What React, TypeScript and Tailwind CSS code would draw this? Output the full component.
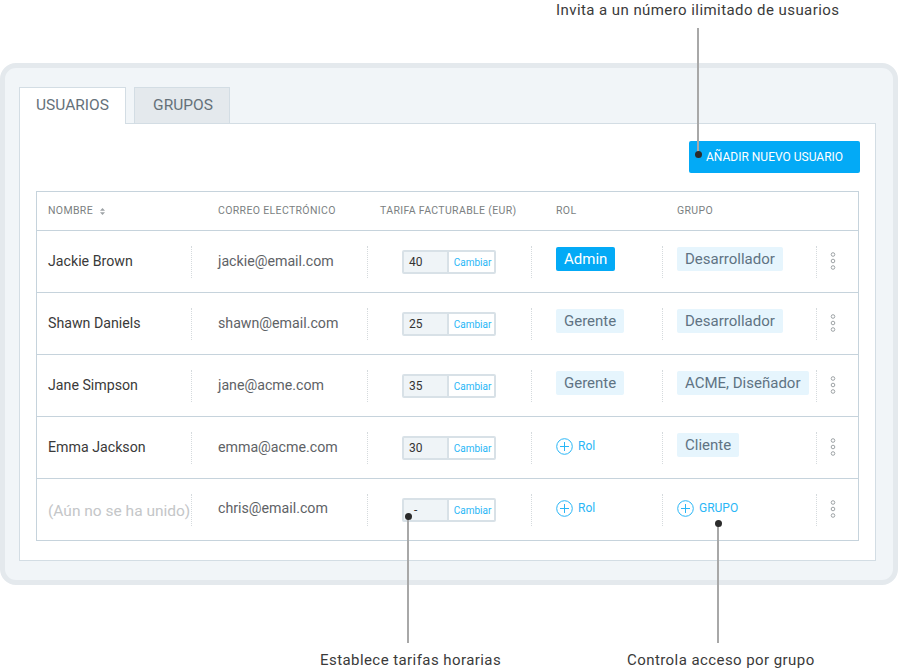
const ROWS = [
  { name: "Jackie Brown", email: "jackie@email.com", rate: "40", rol: "Admin", grupo: "Desarrollador" },
  { name: "Shawn Daniels", email: "shawn@email.com", rate: "25", rol: "Gerente", grupo: "Desarrollador" },
  { name: "Jane Simpson", email: "jane@acme.com", rate: "35", rol: "Gerente", grupo: "ACME, Diseñador" },
  { name: "Emma Jackson", email: "emma@acme.com", rate: "30", rol: "", grupo: "Cliente" },
  { name: "(Aún no se ha unido)", email: "chris@email.com", rate: "-", rol: "", grupo: "", pending: true },
];

function PlusCircle() {
  return (
    <svg width="17" height="17" viewBox="0 0 17 17" fill="none" stroke="#29b6f6" strokeWidth="1" className="shrink-0">
      <circle cx="8.5" cy="8.5" r="7.8" />
      <path d="M8.5 4v9M4 8.5h9" />
    </svg>
  );
}

function Dots() {
  return (
    <svg width="6" height="18" viewBox="0 0 6 18" fill="none" stroke="#9ea3a6" strokeWidth="1" className="mt-[-2px]">
      <circle cx="3" cy="2.5" r="1.8" />
      <circle cx="3" cy="9" r="1.8" />
      <circle cx="3" cy="15.5" r="1.8" />
    </svg>
  );
}

function Cell({ children, className = "" }: { children: React.ReactNode; className?: string }) {
  return (
    <div className="relative flex items-center">
      <div className="h-8 border-l border-dotted border-[#d5dadd]" />
      <div className={"flex h-full flex-1 items-center " + className}>{children}</div>
    </div>
  );
}

function Pill({ text, active }: { text: string; active?: boolean }) {
  return (
    <span
      className={
        "mt-[-5px] flex h-6 items-center whitespace-nowrap rounded-[2px] px-2 text-[15px] " +
        (active ? "bg-[#03aaf6] text-white" : "bg-[#e6f5fd] text-[#5f7383]")
      }
    >
      {text}
    </span>
  );
}

function AddLink({ text }: { text: string }) {
  return (
    <span className="mt-[-2px] flex items-center gap-[5px] text-xs text-[#29b6f6]">
      <PlusCircle />
      <span className="mb-[2px]">{text}</span>
    </span>
  );
}

function Callout({ text, className }: { text: string; className: string }) {
  return <p className={"absolute whitespace-nowrap text-[15px] leading-[18px] tracking-[0.43px] text-[#3a3a3a] " + className}>{text}</p>;
}

export default function App() {
  return (
    <div className="relative h-[669px] w-[898px] overflow-hidden bg-white pt-[63px] font-['Roboto',sans-serif]">
      <div className="h-[522px] rounded-[16px] border-[5px] border-[#e4e9ed] bg-[#f1f5f8] px-[14px] pt-[19px]">
        <div className="flex h-[36px] items-start gap-2">
          <div className="z-10 flex h-[37px] w-[107px] items-center justify-center border border-b-0 border-[#d3dde4] bg-white text-[15.5px] text-[#65717a]">
            USUARIOS
          </div>
          <div className="flex h-[36px] w-[96px] items-center justify-center border border-b-0 border-[#d3dde4] bg-[#e4e9ed] pl-[2px] pt-[1px] text-[15.5px] text-[#65717a]">
            GRUPOS
          </div>
        </div>
        <div className="h-[438px] w-[857px] border border-[#d3dde4] bg-white pl-4 pt-[17px]">
          <div className="flex justify-end pr-[15px]">
            <button className="flex h-8 w-[171px] items-center justify-center rounded-[2px] bg-[#03aaf6] text-xs text-white">
              AÑADIR NUEVO USUARIO
            </button>
          </div>
          <div className="mt-[18px] w-[823px] border border-[#c6d3dc]">
            <div className="grid h-[38px] grid-cols-[154px_176px_164px_131px_154px_1fr] items-center text-[10.5px] tracking-[0.35px] text-[#7b7f82]">
              <div className="flex items-center gap-[7px] pl-[11px]">
                NOMBRE
                <svg width="5" height="7" viewBox="0 0 5 7" fill="#9ea3a6">
                  <path d="M2.5 0 5 2.8H0zM2.5 7 0 4.2h5z" />
                </svg>
              </div>
              <div className="pl-[27px]">CORREO ELECTRÓNICO</div>
              <div className="pl-[13px]">TARIFA FACTURABLE (EUR)</div>
              <div className="pl-[25px]">ROL</div>
              <div className="pl-[15px]">GRUPO</div>
              <div />
            </div>
            {ROWS.map((row) => (
              <div
                key={row.email}
                className="grid h-[62px] grid-cols-[154px_176px_164px_131px_154px_1fr] border-t border-[#c6d3dc]"
              >
                <div
                  className={
                    "flex items-center whitespace-nowrap pl-[11px] " +
                    (row.pending ? "mt-1 text-[15.5px] text-[#c4c6c8]" : "text-[14.2px] text-[#3a3a3a]")
                  }
                >
                  {row.name}
                </div>
                <Cell className={"pl-[26px] text-[14.2px] text-[#5e6266] " + (row.pending ? "pb-[1px]" : "")}>{row.email}</Cell>
                <Cell className="pl-[34px]">
                  <div className="flex h-6 w-[94px] overflow-hidden rounded-[2px] border-2 border-[#d8e1e7] text-[10px]">
                    <div
                      className={
                        "flex w-[45px] items-center border-r-2 border-[#d8e1e7] bg-[#eff4f7] text-xs text-[#333] " +
                        (row.pending ? "pl-[10px]" : "pl-[5px]")
                      }
                    >
                      {row.rate}
                    </div>
                    <div className="flex flex-1 items-center justify-center pl-[2px] pt-[1px] text-[#29b6f6]">Cambiar</div>
                  </div>
                </Cell>
                <Cell className="pl-6">{row.rol ? <Pill text={row.rol} active={row.rol === "Admin"} /> : <AddLink text="Rol" />}</Cell>
                <Cell className="pl-[14px]">{row.grupo ? <Pill text={row.grupo} /> : <AddLink text="GRUPO" />}</Cell>
                <Cell className="pl-[13px]">
                  <Dots />
                </Cell>
              </div>
            ))}
          </div>
        </div>
      </div>

      {/* callouts laid over the table */}
      <Callout text="Invita a un número ilimitado de usuarios" className="left-[556px] top-[1px]" />
      <div className="absolute left-[697px] top-[28px] h-[127px] w-[2px] bg-[#a8a8a8]" />
      <div className="absolute left-[695px] top-[151px] size-[7px] rounded-full bg-[#2b2b2b]" />

      <div className="absolute left-[407px] top-[516px] h-[127px] w-[2px] bg-[#a8a8a8]" />
      <div className="absolute left-[405px] top-[513px] size-[7px] rounded-full bg-[#2b2b2b]" />
      <Callout text="Establece tarifas horarias" className="left-[320px] top-[651px]" />

      <div className="absolute left-[717px] top-[523px] h-[120px] w-[2px] bg-[#a8a8a8]" />
      <div className="absolute left-[715px] top-[520px] size-[7px] rounded-full bg-[#2b2b2b]" />
      <Callout text="Controla acceso por grupo" className="left-[627px] top-[651px]" />
    </div>
  );
}
